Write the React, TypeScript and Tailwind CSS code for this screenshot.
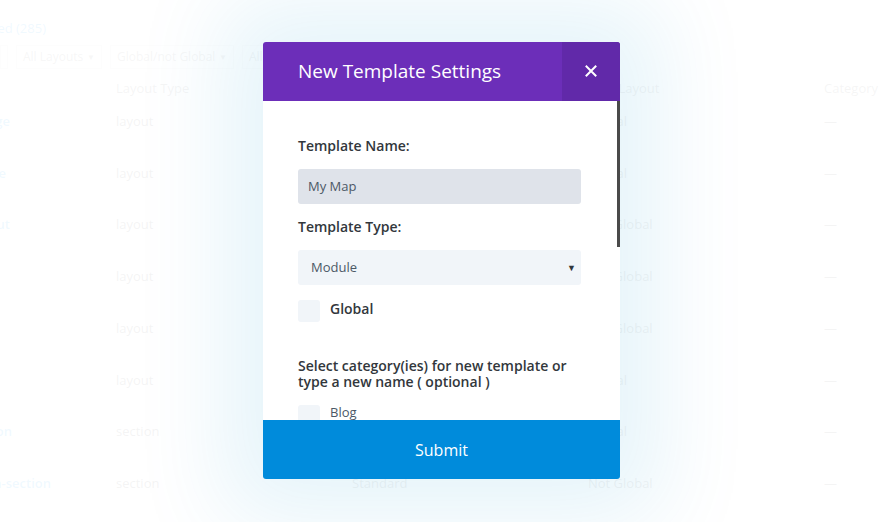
import React from 'react';

const rows = [
  { name: 'Landing Page', w: 'w-[10px]', type: 'layout', used: '', global: 'Global' },
  { name: 'About Page', w: 'w-[6px]', type: 'layout', used: '', global: 'Global' },
  { name: 'Blog Layout', w: 'w-[10px]', type: 'layout', used: '', global: 'Not Global' },
  { name: '', w: 'w-[10px]', type: 'layout', used: '', global: 'Not Global' },
  { name: '', w: 'w-[10px]', type: 'layout', used: '', global: 'Not Global' },
  { name: '', w: 'w-[10px]', type: 'layout', used: '', global: 'Global' },
  { name: 'Hero Section', w: 'w-[12px]', type: 'section', used: '', global: 'Global' },
  { name: 'Call-to-action-section', w: 'w-[51px]', type: 'section', used: 'Standard', global: 'Not Global' },
];

const Library = () => (
  <div className="text-[13px] text-[#666]">
    <div className="h-[22px]" />
    <div className="flex h-[14px] items-center">
      <div className="flex w-[46px] justify-end">
        <span className="shrink-0 whitespace-nowrap text-[#2ea3f2]">Published (285)</span>
      </div>
    </div>
    <div className="mt-[9px] flex h-[24px] items-center gap-[8px] whitespace-nowrap text-[12px] text-[#888]">
      <div className="h-[24px] w-[8px] border border-[#ddd]" />
      <div className="flex h-[24px] w-[86px] items-center justify-between border border-[#ddd] px-[6px]">
        <span>All Layouts</span>
        <span className="text-[8px]">▼</span>
      </div>
      <div className="flex h-[24px] w-[124px] items-center justify-between border border-[#ddd] px-[6px]">
        <span>Global/not Global</span>
        <span className="text-[8px]">▼</span>
      </div>
      <div className="flex h-[24px] w-[120px] items-center border border-[#ddd] px-[6px]">
        <span>All Categories</span>
      </div>
    </div>
    <div className="mt-[13px] flex h-[14px] items-center whitespace-nowrap text-[#777]">
      <div className="w-[116px]" />
      <div className="w-[236px]">Layout Type</div>
      <div className="w-[224px]">Used</div>
      <div className="w-[248px]">Global Layout</div>
      <div>Category</div>
    </div>
    <div>
      {rows.map((r, i) => (
        <div key={i} className="flex h-[51.7px] items-center whitespace-nowrap">
          <div className="w-[116px]">
            <div className={`flex justify-end ${r.w}`}>
              <span className="shrink-0 font-semibold text-[#2ea3f2]">{r.name}</span>
            </div>
          </div>
          <div className="w-[236px]">{r.type}</div>
          <div className="w-[236px]">{r.used}</div>
          <div className="w-[236px]">{r.global}</div>
          <div>—</div>
        </div>
      ))}
    </div>
  </div>
);

const Modal = () => (
  <div className="flex h-[437px] w-[357px] flex-col overflow-hidden rounded-[3px] bg-white shadow-[0_0_90px_40px_rgba(0,150,205,0.10)]">
    <div className="flex h-[59px] shrink-0 items-center bg-[#6c2eb9]">
      <div className="flex-1 pl-[35px] text-[19px] text-white">New Template Settings</div>
      <div className="flex h-full w-[58px] items-center justify-center bg-[#6129a9]">
        <svg width="12" height="12" viewBox="0 0 12 12" className="mt-[-2px]">
          <path d="M1.5 1.5 L10.5 10.5 M10.5 1.5 L1.5 10.5" stroke="#fff" strokeWidth="2" strokeLinecap="square" />
        </svg>
      </div>
    </div>
    <div className="relative flex-1 overflow-hidden">
      <div className="absolute right-0 top-0 h-[146px] w-[3px] bg-[#4a4a4a]" />
      <div className="px-[35px] pt-[35px] text-[#32373c]">
        <div className="text-[14px] font-semibold leading-[20px]">Template Name:</div>
        <div className="mt-[13px] flex h-[35px] w-[283px] items-center rounded-[3px] bg-[#dfe3ea] px-[10px] text-[13px] text-[#4c5866]">
          My Map
        </div>
        <div className="mt-[13px] text-[14px] font-semibold leading-[20px]">Template Type:</div>
        <div className="mt-[13px] flex h-[35px] w-[283px] items-center justify-between rounded-[3px] bg-[#f1f5f9] pl-[13px] pr-[5px] text-[13px] text-[#4c5866]">
          <span>Module</span>
          <span className="text-[9px] text-[#32373c]">▼</span>
        </div>
        <div className="mt-[15px] flex items-start gap-[10px]">
          <div className="h-[22px] w-[22px] rounded-[3px] bg-[#f1f5f9]" />
          <span className="mt-[-1px] text-[14px] font-semibold leading-[20px]">Global</span>
        </div>
        <div className="mt-[36px] text-[14px] font-semibold leading-[16px]">
          Select category(ies) for new template or type a new name ( optional )
        </div>
        <div className="mt-[15px] flex items-start gap-[10px]">
          <div className="h-[22px] w-[22px] rounded-[3px] bg-[#f1f5f9]" />
          <span className="mt-[-2px] text-[13px] leading-[18px] text-[#4c5866]">Blog</span>
        </div>
      </div>
    </div>
    <div className="flex h-[59px] shrink-0 items-center justify-center bg-[#008bdb] text-[16px] text-white">
      Submit
    </div>
  </div>
);

export default function App() {
  return (
    <div className="relative h-[522px] w-[880px] overflow-hidden bg-white font-['Open_Sans',sans-serif]">
      <Library />
      <div className="absolute inset-0 bg-white/[0.93]" />
      <div className="absolute inset-0 flex items-center justify-center pb-[1px] pl-[3px]">
        <Modal />
      </div>
    </div>
  );
}
